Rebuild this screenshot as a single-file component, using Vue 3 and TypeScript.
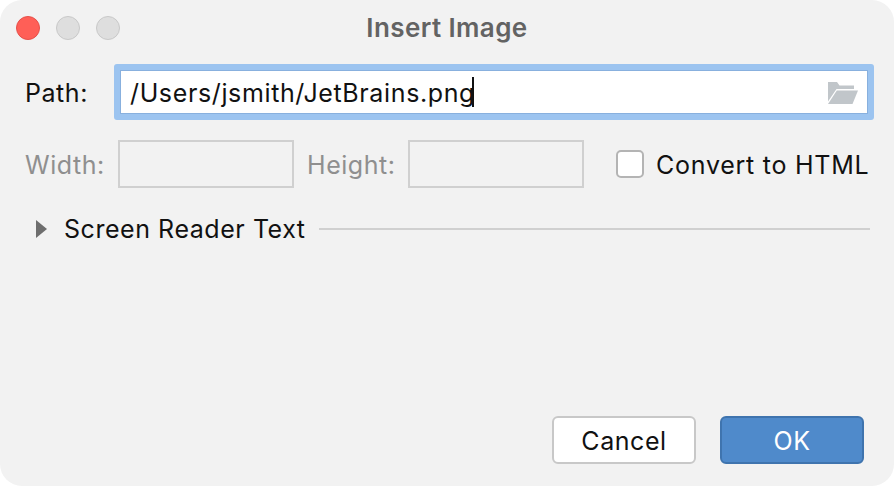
<script setup lang="ts">
import { ref } from "vue";

const path = ref("/Users/jsmith/JetBrains.png");
const lights = ["close", "min", "max"];
</script>

<template>
  <div class="window">
    <header class="titlebar">
      <div class="lights">
        <span v-for="l in lights" :key="l" class="light" :class="l"></span>
      </div>
      <h1>Insert Image</h1>
    </header>

    <div class="path-row">
      <label>Path:</label>
      <div class="path-field">
        <span class="value">{{ path }}</span><span class="caret"></span>
        <svg class="folder" width="32" height="24" viewBox="0 0 32 24">
          <path d="M1 1h9l2.500 3.500H27V8H9.500L1 20.500z" fill="#c1c6ca" />
          <path d="M9.800 9.500H31L25.500 23H1z" fill="#c1c6ca" />
        </svg>
      </div>
    </div>

    <div class="size-row">
      <label class="dim">Width:</label>
      <div class="size-box"></div>
      <label class="dim height">Height:</label>
      <div class="size-box"></div>
      <span class="check"></span>
      <span class="check-label">Convert to HTML</span>
    </div>

    <div class="section-row">
      <svg class="arrow" width="11" height="18" viewBox="0 0 11 18">
        <path d="M0 0l11 9-11 9z" fill="#6e6e6e" />
      </svg>
      <span class="section-title">Screen Reader Text</span>
      <span class="rule"></span>
    </div>

    <footer class="actions">
      <button class="btn">Cancel</button>
      <button class="btn primary">OK</button>
    </footer>
  </div>
</template>

<style>
html, body { margin: 0; background: #fff; }
</style>

<style scoped>
.window {
  width: 894px;
  height: 486px;
  box-sizing: border-box;
  display: flex;
  flex-direction: column;
  background: #f2f2f2;
  border-radius: 22px;
  overflow: hidden;
  font-family: Inter, "Liberation Sans", sans-serif;
  font-size: 25px;
  letter-spacing: 0.55px;
  color: #111;
}
.titlebar {
  height: 56px;
  flex: none;
  display: flex;
  align-items: center;
  justify-content: center;
  position: relative;
}
.titlebar h1 {
  margin: 0 0 2px;
  font-size: 26px;
  font-weight: 600;
  letter-spacing: 0.4px;
  color: #636363;
}
.lights {
  position: absolute;
  left: 16px;
  top: 16px;
  display: flex;
  gap: 16px;
}
.light {
  width: 24px;
  height: 24px;
  box-sizing: border-box;
  border-radius: 50%;
  background: #dedede;
  border: 1px solid #c8c8c8;
}
.light.close { background: #ff5f57; border-color: #e5504a; }
.path-row {
  margin-top: 8px;
  height: 56px;
  flex: none;
  display: flex;
  align-items: center;
  padding-left: 25px;
}
.path-row label { width: 89px; padding-top: 2px; }
.path-field {
  width: 760px;
  height: 56px;
  box-sizing: border-box;
  display: flex;
  align-items: center;
  padding-left: 10px;
  position: relative;
  background: #fff;
  border: 6px solid #9cc4f0;
  border-radius: 3px;
  box-shadow: inset 0 0 0 1px #88b0de;
}
.value { padding-top: 2px; letter-spacing: 0.63px; }
.caret {
  width: 2px;
  height: 30px;
  margin-left: -3px;
  background: #111;
}
.folder { position: absolute; right: 9px; top: 11px; }
.size-row {
  margin-top: 20px;
  height: 48px;
  flex: none;
  display: flex;
  align-items: center;
  padding-left: 25px;
}
.dim { color: #8f8f8f; padding-top: 2px; }
.size-row label:first-child { width: 93px; }
.height { width: 101px; margin-left: 13px; }
.size-box {
  width: 176px;
  height: 48px;
  box-sizing: border-box;
  border: 2px solid #d0d0d0;
}
.check {
  width: 28px;
  height: 28px;
  box-sizing: border-box;
  margin: 0 12px 0 32px;
  background: #fff;
  border: 2px solid #b4b4b4;
  border-radius: 5px;
}
.check-label { white-space: nowrap; padding-top: 2px; letter-spacing: 0.75px; }
.section-row {
  margin-top: 24px;
  height: 34px;
  flex: none;
  display: flex;
  align-items: center;
  padding: 0 24px 0 36px;
}
.section-title { margin-left: 17px; white-space: nowrap; }
.rule {
  flex: 1;
  height: 2px;
  margin-left: 13px;
  background: #d0d0d0;
}
.actions {
  margin-top: auto;
  margin-bottom: 22px;
  display: flex;
  justify-content: flex-end;
  gap: 24px;
  padding-right: 30px;
}
.btn {
  width: 144px;
  height: 48px;
  box-sizing: border-box;
  font: inherit;
  letter-spacing: inherit;
  color: #111;
  background: #fff;
  border: 2px solid #c8c8c8;
  border-radius: 6px;
  padding: 2px 0 0;
}
.btn.primary {
  color: #fff;
  background: #4f8acb;
  border-color: #3f74ae;
}
</style>
